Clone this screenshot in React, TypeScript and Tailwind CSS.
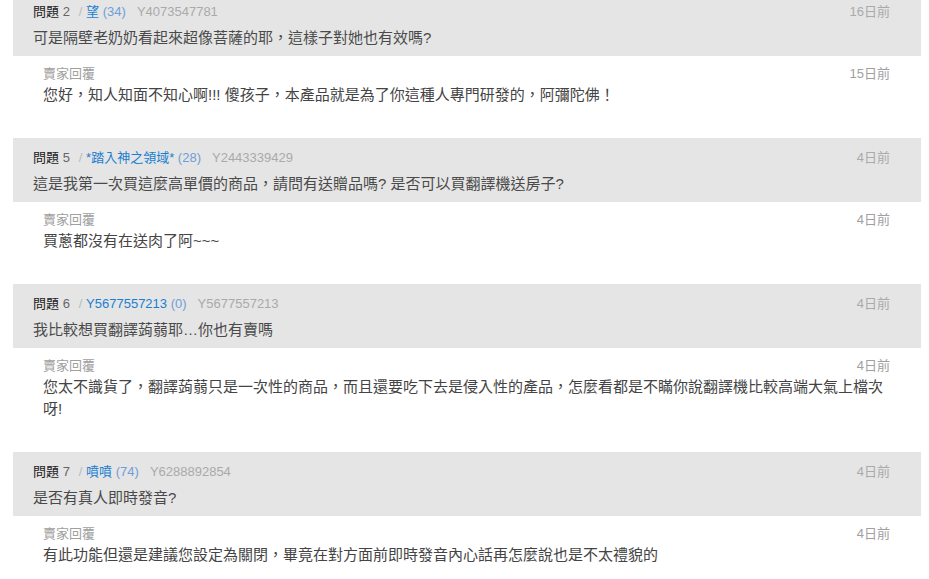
const font = { fontFamily: '"Liberation Sans", "Noto Sans CJK TC", sans-serif' }

interface QA {
  no: number
  name: string
  score: number
  uid: string
  question: string
  qDate: string
  answer: string
  aDate: string
}

const items: QA[] = [
  {
    no: 2,
    name: '望',
    score: 34,
    uid: 'Y4073547781',
    question: '可是隔壁老奶奶看起來超像菩薩的耶，這樣子對她也有效嗎?',
    qDate: '16日前',
    answer: '您好，知人知面不知心啊!!! 傻孩子，本產品就是為了你這種人專門研發的，阿彌陀佛！',
    aDate: '15日前',
  },
  {
    no: 5,
    name: '*踏入神之領域*',
    score: 28,
    uid: 'Y2443339429',
    question: '這是我第一次買這麼高單價的商品，請問有送贈品嗎? 是否可以買翻譯機送房子?',
    qDate: '4日前',
    answer: '買蔥都沒有在送肉了阿~~~',
    aDate: '4日前',
  },
  {
    no: 6,
    name: 'Y5677557213',
    score: 0,
    uid: 'Y5677557213',
    question: '我比較想買翻譯蒟蒻耶…你也有賣嗎',
    qDate: '4日前',
    answer:
      '您太不識貨了，翻譯蒟蒻只是一次性的商品，而且還要吃下去是侵入性的產品，怎麼看都是不瞞你說翻譯機比較高端大氣上檔次呀!',
    aDate: '4日前',
  },
  {
    no: 7,
    name: '噴噴',
    score: 74,
    uid: 'Y6288892854',
    question: '是否有真人即時發音?',
    qDate: '4日前',
    answer: '有此功能但還是建議您設定為關閉，畢竟在對方面前即時發音內心話再怎麼說也是不太禮貌的',
    aDate: '4日前',
  },
]

function App() {
  return (
    <div className="min-h-screen bg-white" style={font}>
      <div className="-mt-[8px] pl-[13px] pr-[8px]">
        {items.map((q) => (
          <div key={q.no}>
            <div className="h-[64px] bg-[#e5e5e5] pl-[20px] pr-[31px] pt-[10px]">
              <div className="flex h-[20px] items-center justify-between text-[13px]">
                <div className="whitespace-pre">
                  <span className="text-[#222]">問題 </span>
                  <span className="text-[#666]">{q.no}</span>
                  <span className="ml-[9px] text-[#bbb]">/ </span>
                  <span className="text-[#1a7fd1]">{q.name}</span>
                  <span className="text-[#6f9ed6]"> ({q.score})</span>
                  <span className="ml-[11px] text-[#aaa]">{q.uid}</span>
                </div>
                <span className="text-[#aaa]">{q.qDate}</span>
              </div>
              <div className="mt-[4px] text-[15px] leading-[24px] text-[#4a4a4a]">{q.question}</div>
            </div>
            <div className="pb-[32px] pl-[30px] pr-[31px] pt-[8px]">
              <div className="flex h-[20px] items-center justify-between text-[13px] text-[#a0a0a0]">
                <span>賣家回覆</span>
                <span>{q.aDate}</span>
              </div>
              <div className="text-[15px] leading-[22px] text-[#444]">{q.answer}</div>
            </div>
          </div>
        ))}
      </div>
    </div>
  )
}

export default App
